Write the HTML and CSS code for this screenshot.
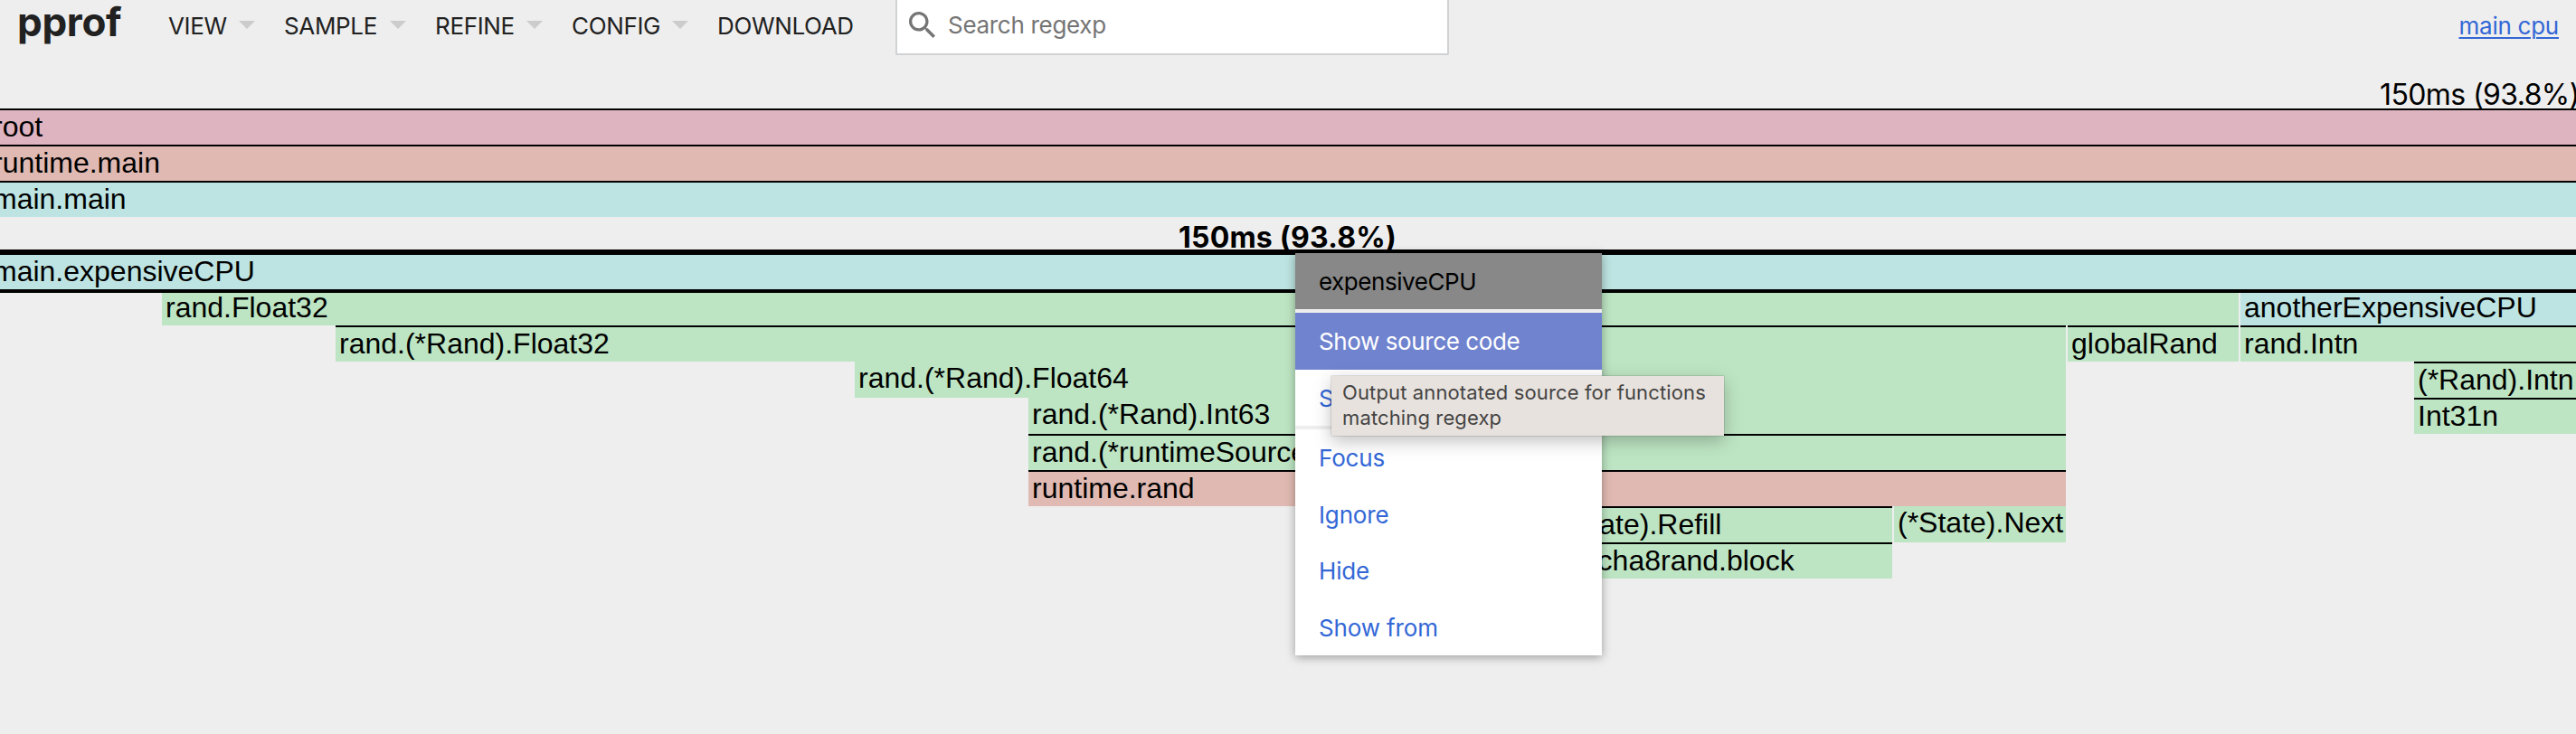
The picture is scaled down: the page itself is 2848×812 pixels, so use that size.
FILE: index.html
```
<!DOCTYPE html>
<html lang="en">
<head>
<meta charset="utf-8">
<title>main cpu</title>
<link rel="stylesheet" href="styles.css">
</head>
<body>
<header class="header">
  <h1 class="title">pprof</h1>
  <nav class="nav">
    <div class="nav-item view"><span>VIEW</span><i class="arrow"></i></div>
    <div class="nav-item sample"><span>SAMPLE</span><i class="arrow"></i></div>
    <div class="nav-item refine"><span>REFINE</span><i class="arrow"></i></div>
    <div class="nav-item config"><span>CONFIG</span><i class="arrow"></i></div>
    <div class="nav-item download"><span>DOWNLOAD</span></div>
  </nav>
  <div class="search">
    <svg class="search-icon" viewBox="3 3 17.49 17.49"><path d="M15.5 14h-.79l-.28-.27C15.41 12.59 16 11.11 16 9.5 16 5.91 13.09 3 9.5 3S3 5.91 3 9.5 5.91 16 9.5 16c1.61 0 3.09-.59 4.23-1.57l.27.28v.79l5 4.99L20.49 19l-4.99-5zm-6 0C7.01 14 5 11.99 5 9.5S7.01 5 9.5 5 14 7.01 14 9.5 11.99 14 9.5 14z"/></svg>
    <span class="placeholder">Search regexp</span>
  </div>
  <a class="profile">main cpu</a>
</header>
<main class="flame">
  <div class="total"><span>150ms (93.8%)</span></div>
  <div class="row"><div class="bar pink line full">root</div></div>
  <div class="row"><div class="bar rose line full">runtime.main</div></div>
  <div class="row"><div class="bar teal line full">main.main</div></div>
  <div class="current"><span>150ms (93.8%)</span></div>
  <div class="row"><div class="bar teal line full selected">main.expensiveCPU</div></div>
  <div class="row"><div class="bar green line" style="margin-left:179px;width:2296px">rand.Float32</div><div class="bar teal line" style="width:371px">anotherExpensiveCPU</div></div>
  <div class="row"><div class="bar green line" style="margin-left:371px;width:1913px">rand.(*Rand).Float32</div><div class="bar green line" style="width:189px">globalRand</div><div class="bar green line" style="width:371px">rand.Intn</div></div>
  <div class="row"><div class="bar green" style="margin-left:945px;width:1339px">rand.(*Rand).Float64</div><div class="bar green line last">(*Rand).Intn</div></div>
  <div class="row"><div class="bar green" style="margin-left:1137px;width:1147px">rand.(*Rand).Int63</div><div class="bar green line last">Int31n</div></div>
  <div class="row"><div class="bar green line" style="margin-left:1137px;width:1147px">rand.(*runtimeSource).Uint64</div></div>
  <div class="row"><div class="bar rose line" style="margin-left:1137px;width:1147px">runtime.rand</div></div>
  <div class="row"><div class="bar green line" style="margin-left:1517px;width:575px">chacha8rand.(*State).Refill</div><div class="bar green" style="width:190px">(*State).Next</div></div>
  <div class="row"><div class="bar green line" style="margin-left:1711px;width:381px">chacha8rand.block</div></div>
</main>
<div class="menu">
  <div class="menu-title">expensiveCPU</div>
  <hr class="rule">
  <a class="menu-item active">Show source code</a>
  <a class="menu-item">Show source in new tab</a>
  <hr class="rule">
  <a class="menu-item">Focus</a>
  <a class="menu-item">Ignore</a>
  <a class="menu-item">Hide</a>
  <a class="menu-item">Show from</a>
</div>
<div class="tooltip">Output annotated source for functions matching regexp</div>
</body>
</html>
```
FILE: styles.css
```
* { box-sizing: border-box; }
body {
  position: relative;
  margin: 0;
  width: 2848px;
  height: 812px;
  overflow: hidden;
  background: #eee;
  color: #000;
  font-family: Inter, "Liberation Sans", sans-serif;
  font-size: 26px;
}
.header {
  display: flex;
  height: 88px;
  color: #212121;
}
.title {
  width: 186px;
  margin: 0;
  padding-left: 19px;
  font-size: 44px;
  line-height: 48px;
  letter-spacing: -0.3px;
  font-weight: 700;
}
.nav { display: flex; width: 804px; }
.nav-item {
  display: flex;
  align-items: center;
  height: 57px;
  white-space: nowrap;
  letter-spacing: -0.35px;
}
.view { width: 128px; }
.sample { width: 167px; }
.refine { width: 151px; }
.config { width: 161px; }
.arrow {
  margin: 0 32px 2px auto;
  border: 9px solid transparent;
  border-top-color: #ccc;
  border-bottom: 0;
}
.search {
  display: flex;
  align-items: flex-start;
  width: 612px;
  height: 61px;
  padding: 13px 0 0 13px;
  background: #fff;
  border: 2px solid #d1d2d3;
  border-top: 0;
  border-radius: 0 0 2px 2px;
}
.search-icon { width: 29px; height: 29px; margin-right: 14px; fill: #757575; }
.placeholder { line-height: 30px; letter-spacing: -0.3px; color: #757575; }
.profile {
  margin-left: auto;
  padding-right: 19px;
  line-height: 57px;
  letter-spacing: -0.25px;
  color: #3367d6;
  text-decoration: underline;
  text-decoration-thickness: 2px;
  text-underline-offset: 3px;
}
.total, .current { display: flex; font-size: 32px; white-space: nowrap; }
.total { height: 32px; padding-left: 2631px; line-height: 33px; letter-spacing: -0.6px; }
.current { height: 40px; padding-left: 1303px; line-height: 45px; font-weight: 700; letter-spacing: 0.2px; }
.row { display: flex; gap: 2px; height: 40px; }
.bar {
  flex: none;
  height: 40px;
  padding-left: 4px;
  overflow: hidden;
  font: 32px/36px "Liberation Sans", Arial, sans-serif;
  white-space: nowrap;
}
.full { width: 2872px; margin-left: -12px; }
.last { width: 179px; margin-left: 383px; }
.line { border-top: 2px solid #000; }
.selected { position: relative; box-shadow: 0 0 0 4px #000; }
.pink { background: #dfb4c1; }
.rose { background: #e0bab2; }
.teal { background: #bde4e2; }
.green { background: #bde5c3; }
.menu {
  position: absolute;
  left: 1432px;
  top: 280px;
  width: 339px;
  background: #fff;
  box-shadow: 0 2px 10px rgba(0, 0, 0, .35);
  color: #3367d6;
  white-space: nowrap;
}
.menu-title, .menu-item {
  display: block;
  height: 62.5px;
  padding-left: 26px;
  overflow: hidden;
  line-height: 63px;
  letter-spacing: -0.15px;
}
.menu-title { height: 62px; background: #888; color: #000; letter-spacing: -0.45px; }
.active { background: #7083cf; color: #fff; letter-spacing: -0.4px; }
.rule { height: 4px; margin: 0; border: 0; background: #eee; }
.tooltip {
  position: absolute;
  left: 1472px;
  top: 416px;
  width: 434px;
  height: 66px;
  padding: 4px 12px;
  background: #e7e2de;
  box-shadow: 0 0 1px rgba(0, 0, 0, .6), 0 6px 18px rgba(0, 0, 0, .25);
  color: #454443;
  font-size: 22px;
  line-height: 28px;
  letter-spacing: 0.13px;
}
```
